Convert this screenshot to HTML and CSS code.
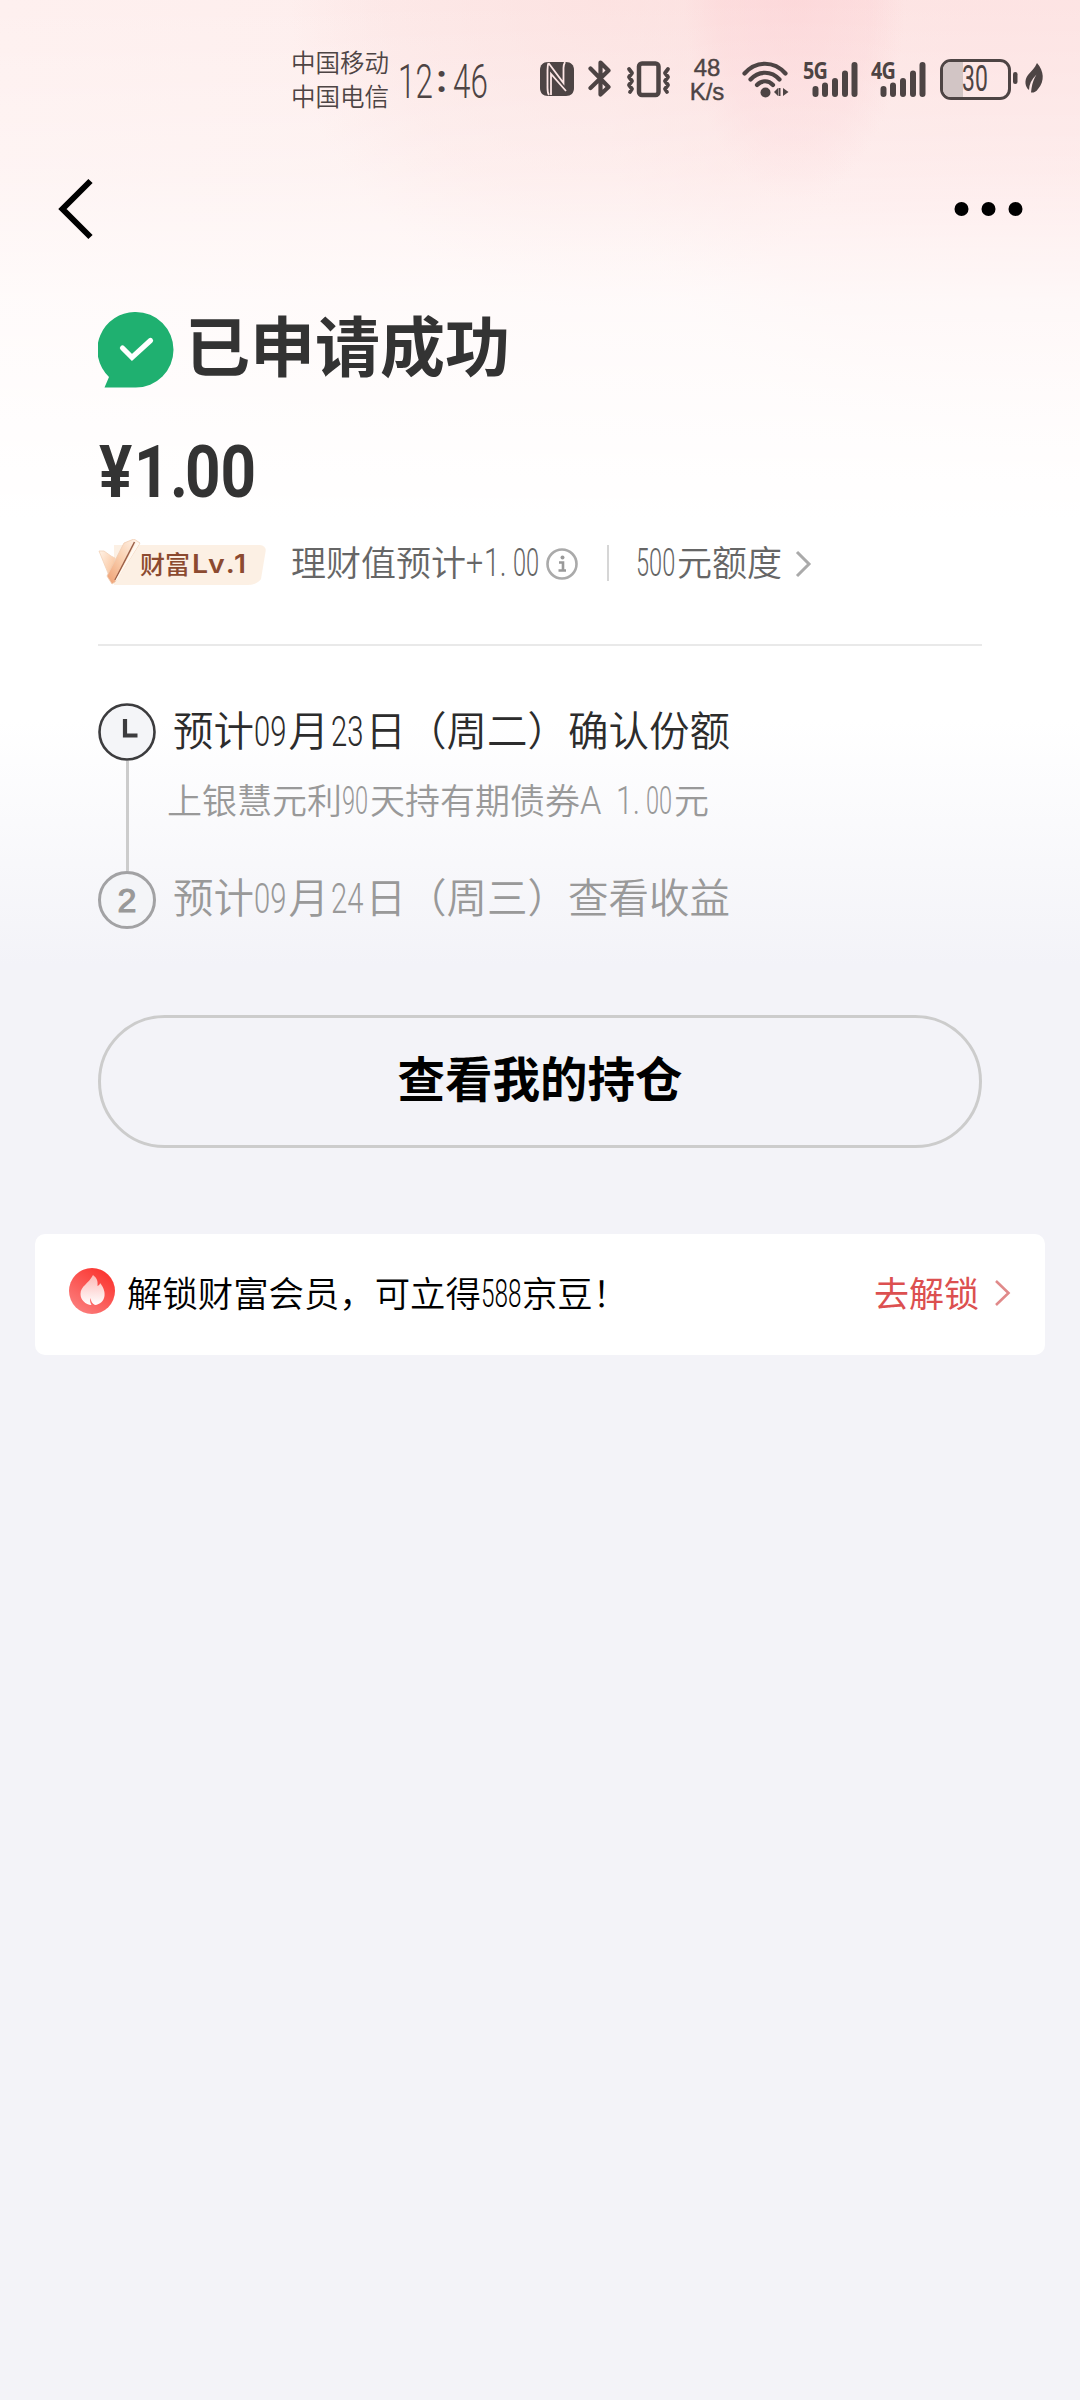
FILE: index.html
```html
<!DOCTYPE html>
<html lang="zh-CN">
<head>
<meta charset="utf-8">
<title>已申请成功</title>
<link rel="stylesheet" href="styles.css">
</head>
<body>
<div class="page">
  <header class="status">
    <div class="carriers"><span>中国移动</span><span>中国电信</span></div>
    <div class="clock"><span class="cond">12</span><b>:</b><span class="cond">46</span></div>
    <svg class="nfc" width="34" height="36" viewBox="0 0 34 36"><path fill="#4d4444" d="M8 1h18c5 0 8 3 8 8v18c0 5-3 8-8 8H8c-5 0-8-3-8-8V9c0-5 3-8 8-8z"/><path d="M8.500 2C7.500 4 7.500 6 7.500 9v18c0 3 0 5 1.500 7M11 34V13l15 17M8.500 2L23.500 22V7c0-3 .5-4 1.500-6" fill="none" stroke="#fde6e5" stroke-width="1.800"/></svg>
    <svg class="bt" width="24" height="37" viewBox="0 0 24 37" fill="none" stroke="#4d4444" stroke-width="4.200" stroke-linejoin="round" stroke-linecap="round"><path d="M2.500 8.500l18 18.500-8 7.500V2.500l8 8L2.500 28"/></svg>
    <svg class="vib" width="46" height="37" viewBox="0 0 46 37" fill="none" stroke="#4d4444" stroke-linecap="round" stroke-linejoin="round"><rect x="13" y="2.500" width="19.500" height="31.500" rx="3" stroke-width="4.500"/><path stroke-width="3.800" d="M3 8l3 4-3 4 3 4-3 4 3 4-2 3M42 8l-3 4 3 4-3 4 3 4-3 4 2 3"/></svg>
    <div class="rate"><span>48</span><span>K/s</span></div>
    <svg class="wifi" width="48" height="37" viewBox="0 0 48 37"><g fill="none" stroke="#4d4444" stroke-width="4.200" stroke-linecap="round"><path d="M2.500 12.500C14-.5 32-.5 43.500 12.500M8.500 18.500c8-9 21-9 29 0M15 24c4.500-5 11.500-5 16 0"/></g><circle cx="23.500" cy="31.500" r="5" fill="#4d4444"/><path fill="#4d4444" d="M32 31l4-4v8zM36.500 27h2v8h-2zM41 27l5.500 4-5.500 4z"/></svg>
    <div class="signal"><span>5G</span><svg width="47" height="37" viewBox="0 0 47 37" stroke="#4d4444" stroke-width="6" stroke-linecap="round"><path d="M3.500 28v5M13 24.500v8.500M23 20v13M33 12.500V33M42.500 4v29"/></svg></div>
    <div class="signal"><span>4G</span><svg width="47" height="37" viewBox="0 0 47 37" stroke="#4d4444" stroke-width="6" stroke-linecap="round"><path d="M3.500 28v5M13 24.500v8.500M23 20v13M33 12.500V33M42.500 4v29"/></svg></div>
    <div class="battery"><i></i><span class="cond">30</span></div>
    <svg class="leaf" width="34" height="34" viewBox="0 0 34 34"><rect x="1" y="9" width="4.500" height="12" rx="2.200" fill="#4d4444"/><path fill="#4d4444" d="M25 0c7 8 8 18 1 26-2 3-5 4-7 3.500l.5-4c1-6 2.500-10 5-14-5 5-7.500 10-7.500 15.500-4-3-5-10-1-15 3-4 7-7 9-12z"/></svg>
  </header>

  <nav class="nav">
    <svg width="40" height="64" viewBox="0 0 40 64" fill="none" stroke="#000" stroke-width="6"><path d="M35.500 4L7.500 32l28 28"/></svg>
    <svg width="70" height="16" viewBox="0 0 70 16"><circle cx="7.500" cy="8" r="7"/><circle cx="34.500" cy="8" r="7"/><circle cx="61.500" cy="8" r="7"/></svg>
  </nav>

  <main class="result">
    <h1 class="title"><svg width="76" height="76" viewBox="0 0 76 76"><path fill="#1fb070" d="M37.750 0a37.750 37.750 0 0 1 0 75.500H6.500L11 65A37.750 37.750 0 0 1 37.750 0z"/><path d="M24.500 36l9.500 9.500L52.500 28.500" fill="none" stroke="#fff" stroke-width="5.200" stroke-linecap="round"/></svg><span>已申请成功</span></h1>
    <div class="price"><span>¥</span><span>1</span><span>.</span><span>00</span></div>
    <div class="meta">
      <div class="badge">
        <svg width="44" height="48" viewBox="0 0 44 48"><defs><linearGradient id="v1" x1="0" y1="0" x2="1" y2="1"><stop offset="0" stop-color="#fff3e8"/><stop offset=".6" stop-color="#fbcfae"/><stop offset="1" stop-color="#f2ac7c"/></linearGradient><linearGradient id="v2" x1="1" y1="0" x2="0" y2="1"><stop offset="0" stop-color="#fff6ee"/><stop offset=".5" stop-color="#fad0b0"/><stop offset="1" stop-color="#ee9f72"/></linearGradient></defs><path fill="url(#v1)" stroke="#f3d2b8" stroke-width=".8" d="M1 12h5l7 5 4 2-3 25z"/><path fill="url(#v2)" stroke="#f0cdb2" stroke-width=".8" d="M26 4l10-4 6 4-25 39-3 2-5-8z"/><path d="M36.500 3L17 41" stroke="#9a5f48" stroke-width="1.500"/><path d="M38.500 3l3 1.500L19 41l-2 1z" fill="#fff8f0"/></svg>
        <span class="cn">财富</span><span class="lv">Lv.1</span>
      </div>
      <div class="growth">理财值预计<span class="cond plus">+</span><span class="cond one">1.</span><span class="cond zeros">00</span></div>
      <svg class="info" width="32" height="32" viewBox="0 0 32 32"><circle cx="16" cy="16" r="14.500" fill="none" stroke="#aaa" stroke-width="2.600"/><circle cx="16.500" cy="9.500" r="2" fill="#999"/><path d="M13 14.500h4v8M12.500 22.500h7.500" fill="none" stroke="#999" stroke-width="2.600"/></svg>
      <i class="bar"></i>
      <div class="quota"><span class="cond n500">500</span>元额度</div>
      <svg class="arrow" width="18" height="28" viewBox="0 0 18 28" fill="none" stroke="#aaa" stroke-width="3"><path d="M2 2l12 12L2 26"/></svg>
    </div>

    <section class="steps">
      <div class="rail">
        <svg width="58" height="58" viewBox="0 0 58 58"><circle cx="29" cy="29" r="27.500" fill="#f4f5f8" stroke="#3c3c3e" stroke-width="2.600"/><path d="M27 16v16.500h12.500" fill="none" stroke="#3c3c3e" stroke-width="4.200"/></svg>
        <i></i>
        <div class="num">2</div>
      </div>
      <div class="lines">
        <p class="now">预计<span class="cond">09</span><span class="month">月</span><span class="cond">23</span>日（周二）确认份额</p>
        <p class="fund">上银慧元利<span class="cond c90">90</span>天持有期债券<span class="cond ca">A</span><span class="cond c1">1.</span><span class="cond c00">00</span>元</p>
        <p class="next">预计<span class="cond">09</span><span class="month">月</span><span class="cond">24</span>日（周三）查看收益</p>
      </div>
    </section>

    <button class="holdings">查看我的持仓</button>
  </main>

  <aside class="promo">
    <svg width="46" height="46" viewBox="0 0 46 46"><defs><linearGradient id="f" x1="1" y1="0" x2=".3" y2="1"><stop offset=".15" stop-color="#fb3631"/><stop offset="1" stop-color="#fb7c7b"/></linearGradient><linearGradient id="w" x1="0" y1="0" x2="0" y2="1"><stop offset="0" stop-color="#fdb8b5"/><stop offset="1" stop-color="#fff"/></linearGradient></defs><circle cx="23" cy="23" r="23" fill="url(#f)"/><path fill="url(#w)" d="M24 7c4 3 5 6 4.500 11 2-1 2.500-2 2.500-3 4 5 5 9 4.500 13-.7 5-4.500 8.500-9.500 9-3-1.500-4-3.500-4.500-7-1 3 0 5 1 7-6-.5-11-5-11-11 0-8 8-10 12.500-19z"/></svg>
    <p>解锁财富会员，可立得<span class="cond n588">588</span>京豆！</p>
    <a>去解锁</a>
    <svg class="go" width="18" height="28" viewBox="0 0 18 28" fill="none" stroke="#e08a8a" stroke-width="2.600"><path d="M2 2l12.500 12L2 26"/></svg>
  </aside>
</div>
</body>
</html>
```
FILE: styles.css
```css
* { box-sizing: border-box; }
body { margin: 0; font-family: "Noto Sans CJK SC", sans-serif; font-weight: 350; }
p, h1 { margin: 0; }
svg, i { display: block; flex: none; }

.page {
  width: 1080px;
  height: 2400px;
  overflow: hidden;
  background:
    linear-gradient(180deg, rgba(255,255,255,0) 0, rgba(255,255,255,.3) 170px, rgba(255,255,255,.72) 300px, #fff 520px, #fff 720px, #f3f3f8 965px, #f3f3f8 100%),
    radial-gradient(ellipse 110px 200px at 795px 0, rgba(252,211,214,.65) 0, rgba(252,211,214,.4) 70%, rgba(252,211,214,0) 100%),
    radial-gradient(circle 310px at 600px 0, rgba(252,224,223,.8) 0, rgba(252,224,223,.4) 70%, rgba(252,224,223,0) 100%),
    radial-gradient(circle 400px at 1000px 60px, rgba(253,224,224,.7) 0, rgba(253,224,224,.5) 75%, rgba(253,224,224,0) 100%),
    linear-gradient(100deg, #fef0ef 0, #fdebea 70%, #fde8e7 100%);
}

/* Roboto digits squeezed to a condensed set; each use sets its own width */
.cond {
  display: inline-block;
  font-family: Roboto, sans-serif;
  font-weight: 300;
  line-height: 1;
  white-space: nowrap;
  text-align: left;
  transform-origin: left center;
}

.status { display: flex; align-items: flex-start; height: 140px; padding: 60px 0 0 291px; color: #4d4444; }
.carriers { display: flex; flex-direction: column; width: 107px; margin-top: -15px; font-size: 24.500px; line-height: 34px; }
.clock { display: flex; width: 142px; height: 40px; line-height: 42px; }
.clock .cond { width: 35px; font-size: 49px; line-height: 43px; transform: scaleX(.64); }
.clock b { width: 17px; margin-right: 3px; font: 700 38px/38px Roboto, sans-serif; text-align: center; }
.nfc { margin-top: 1px; }
.bt { margin-left: 14px; }
.vib { margin-left: 14px; margin-top: 1px; }
.rate { display: flex; flex-direction: column; align-items: center; width: 42px; margin-left: 14px; margin-top: -4px; font: 400 24px/24px "Liberation Sans", sans-serif; -webkit-text-stroke: .4px #4d4444; }
.wifi { margin-left: 14px; margin-top: 1px; }
.signal { position: relative; width: 57px; margin-left: 13px; padding-left: 9px; }
.signal + .signal { margin-left: 11px; }
.signal svg { margin-top: 1px; }
.signal span { position: absolute; left: 0; top: -1px; font: 700 23px/22px "Open Sans", sans-serif; letter-spacing: -1px; transform: scaleX(.86); transform-origin: left; }
.battery { display: flex; align-items: center; width: 71px; height: 41px; margin: -1px 0 0 12px; border: 3px solid #4d4444; border-radius: 11px; }
.battery i { width: 20px; height: 35px; background: #d2c5c5; border-radius: 8px 0 0 8px; }
.battery .cond { width: 30px; font-size: 37px; line-height: 34px; transform: scaleX(.62); font-weight: 400; margin: 0 0 1px -1px; }
.leaf { margin: 3px 0 0 1px; }

.nav { display: flex; align-items: center; justify-content: space-between; height: 138px; padding: 0 56px 0 55px; }

.result { padding: 34px 98px 0 98px; }
.title { display: flex; align-items: center; height: 76px; font-size: 65px; line-height: 76px; font-weight: 700; color: #333; }
.title span { margin: -14px 0 0 11px; }
.price { display: flex; align-items: flex-start; height: 72px; margin-top: 47px; font: 700 73px/75px Roboto, sans-serif; color: #333; }
.price span { transform: scaleX(.85); transform-origin: left center; width: 36px; }
.price span:first-child { margin-left: 1px; }
.price span:nth-child(2) { margin-left: -1px; }
.price span:nth-child(3) { width: 15px; }

.meta { display: flex; align-items: center; height: 48px; margin-top: 32px; font-size: 35px; color: #666; line-height: 44px; }
.badge { display: flex; align-items: center; width: 168px; height: 40px; margin-top: 4px; font-size: 25px; line-height: 36px; font-weight: 500; color: #8c4a30; background: linear-gradient(#fcf0e4, #fcf0e4) 16px 0/152px 40px no-repeat; border-radius: 0 6px 18px 0; clip-path: polygon(0 -10px, 168px -10px, 168px 4px, 163px 34px, 156px 50px, 0 50px); }
.badge svg { margin-top: -4px; }
.badge .cn { width: 52px; margin: -4px 0 0 -2px; }
.badge .lv { margin-top: -2px; font: 600 25px/36px Inter, sans-serif; letter-spacing: 1.700px; transform: scaleX(1.140); transform-origin: left; }
.growth { width: 254px; margin-left: 25px; margin-top: -5px; white-space: nowrap; }
.growth .cond, .quota .cond { font-size: 38px; transform: scaleX(.62); }
.growth .plus { width: 18px; transform: scaleX(.8); }
.growth .one { width: 29px; transform: scaleX(.75); }
.growth .zeros { width: 28px; }
.info { margin-top: 1px; margin-left: 1px; }
.bar { width: 2px; height: 36px; margin-left: 29px; background: #d6d6d6; }
.quota { margin-left: 27px; margin-top: -5px; width: 148px; white-space: nowrap; }
.quota .n500 { width: 41px; }
.arrow { margin-left: 11px; margin-top: 1px; }

.steps { display: flex; margin-top: 57px; padding-top: 57px; border-top: 2px solid #e9e9e9; height: 286px; }
.rail { display: flex; flex-direction: column; align-items: center; width: 58px; }
.rail i { width: 3px; height: 110px; background: #ccc; }
.num { width: 58px; height: 58px; border: 3px solid #a2a2a4; border-radius: 50%; background: #f4f5f8; font: 400 34px/52px "Liberation Sans", sans-serif; -webkit-text-stroke: 1.2px #999; color: #999; text-align: center; }
.lines { padding-left: 17px; white-space: nowrap; }
.lines p { height: 56px; line-height: 56px; font-size: 40.500px; margin-top: -2px; }
.lines .cond { width: 34.500px; font-size: 43px; transform: scaleX(.68); }
.lines .now { color: #2c2c2c; }
.lines .fund { margin: 14px 0 43px -6px; font-size: 35px; color: #999; }
.lines .month { margin-right: 2px; }
.lines .fund .cond { font-size: 38px; transform: scaleX(.62); }
.lines .fund .c90 { width: 28px; }
.lines .fund .ca { width: 36px; transform: scaleX(.9); }
.lines .fund .c1 { width: 30px; transform: scaleX(.8); }
.lines .fund .c00 { width: 28px; }
.lines .next { color: #999; }

.holdings { display: block; width: 884px; height: 133px; margin-top: 85px; padding: 0 0 10px; border: 3px solid #ccc; border-radius: 67px; background: none; font: 700 47.500px/1.300 "Noto Sans CJK SC", sans-serif; color: #000; }

.promo { display: flex; align-items: center; height: 121px; margin: 86px 35px 0; padding: 0 33px 0 34px; border-radius: 10px; background: #fff; font-size: 35.400px; line-height: 50px; }
.promo > svg { margin-top: -8px; }
.promo p { flex: 1; margin: -6px 0 0 12px; white-space: nowrap; color: #000; }
.promo .n588 { width: 41px; font-size: 38px; transform: scaleX(.64); }
.promo a { margin-top: -6px; color: #dc5050; font-weight: 400; font-size: 35px; }
.promo .go { margin: -4px 0 0 15px; }
```
